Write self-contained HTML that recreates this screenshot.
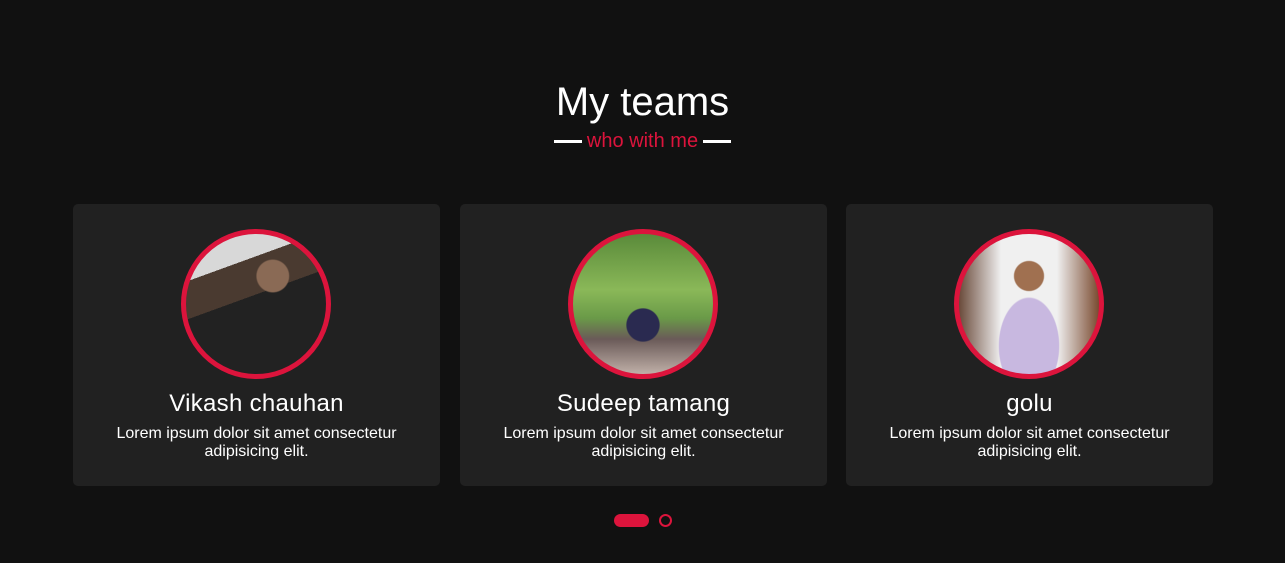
<!DOCTYPE html>
<html><head><style>
body{margin:0;width:1285px;height:563px;background:#111;font-family:"Liberation Sans",sans-serif;color:#fff;position:relative;overflow:hidden}
h1{position:absolute;top:79px;left:0;width:100%;text-align:center;margin:0;font-weight:normal;font-size:40px;line-height:46px}
.sub{position:absolute;top:130px;left:0;width:100%;text-align:center;color:#dc143c;font-size:20px;line-height:22px}
.sub span{display:inline-block;width:28px;height:3px;background:#fff;vertical-align:middle;margin:0 5px}
.card{position:absolute;top:204px;width:367px;height:282px;background:#212121;border-radius:5px;text-align:center}
.pic{position:absolute;left:108px;top:25px;width:140px;height:140px;border:5px solid #dc143c;border-radius:50%;overflow:hidden}
.name{position:absolute;top:186px;width:100%;font-size:24px;line-height:28px;letter-spacing:0.3px}
.desc{position:absolute;top:221px;left:30px;right:30px;font-size:16px;line-height:18px}
.dot1{position:absolute;left:614px;top:514px;width:35px;height:13px;border-radius:7px;background:#dc143c}
.dot2{position:absolute;left:659px;top:514px;width:9px;height:9px;border-radius:50%;border:2px solid #dc143c}
</style></head><body>
<h1>My teams</h1>
<div class="sub"><span></span>who with me<span></span></div>
<div class="card" style="left:73px"><div class="pic" style="background:radial-gradient(circle at 62% 30%,#8a6a55 0 12%,transparent 13%),linear-gradient(160deg,#d8d8d8 0 25%,#4a3a30 25% 45%,#222 45% 100%)"></div><div class="name">Vikash chauhan</div><div class="desc">Lorem ipsum dolor sit amet consectetur adipisicing elit.</div></div>
<div class="card" style="left:460px"><div class="pic" style="background:radial-gradient(circle at 50% 65%,#2a2a50 0 14%,transparent 15%),linear-gradient(180deg,#5a8a3a 0,#8ab858 40%,#6a9a48 60%,#6a5a58 75%,#c0b0a8 100%)"></div><div class="name">Sudeep tamang</div><div class="desc">Lorem ipsum dolor sit amet consectetur adipisicing elit.</div></div>
<div class="card" style="left:846px"><div class="pic" style="background:radial-gradient(ellipse at 50% 80%,#c8b8e0 0 30%,transparent 31%),radial-gradient(circle at 50% 30%,#a07050 0 12%,transparent 13%),linear-gradient(90deg,#6a4a3a,#f0f0f0 30%,#f0f0f0 70%,#7a4a30)"></div><div class="name">golu</div><div class="desc">Lorem ipsum dolor sit amet consectetur adipisicing elit.</div></div>
<div class="dot1"></div><div class="dot2"></div>
</body></html>
